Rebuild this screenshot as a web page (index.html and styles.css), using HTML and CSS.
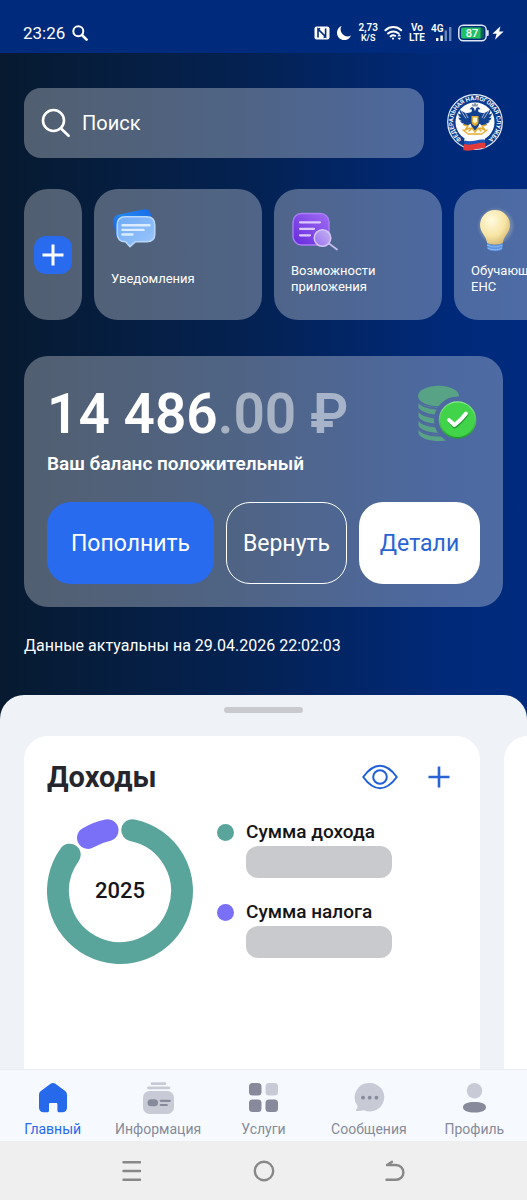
FILE: index.html
```html
<!DOCTYPE html>
<html lang="ru">
<head>
    <meta charset="utf-8">
    <meta name="viewport" content="width=device-width, initial-scale=1">
    <title>Налоги</title>
    <link rel="stylesheet" href="styles.css">
</head>
<body>
    <header class="status-bar">
        <div class="status-left">
            <span class="clock">23:26</span>
            <svg width="16" height="16" viewBox="0 0 16 16" fill="none" stroke="#fff" stroke-width="2" stroke-linecap="round"><circle cx="6.3" cy="6.3" r="5"/><path d="M10 10l4.6 4.6" stroke-width="2.6"/></svg>
        </div>
        <div class="status-right">
            <svg width="16" height="14" viewBox="0 0 16 14"><rect x="0.5" y="0.5" width="15" height="13" rx="2" fill="#fff"/><path d="M4 11.5V3.2L11.6 10.6V2.5M4 3.2L6.2 2.6M11.6 10.6L9.6 11.4" fill="none" stroke="#002b7c" stroke-width="1.6"/></svg>
            <svg width="16" height="16" viewBox="0 0 16 16"><path d="M5.6 1A7.3 7.3 0 1 0 15 10.6 7 7 0 0 1 5.6 1z" fill="#fff"/></svg>
            <span class="tiny">2,73<br><small>K/S</small></span>
            <svg class="wifi" width="19" height="16" viewBox="0 0 19 16" fill="none" stroke="#fff" stroke-width="2" stroke-linecap="round"><path d="M1.4 5.2a11.6 11.6 0 0 1 15.8 0M4 8.4a8 8 0 0 1 10.6 0M6.6 11.4a4.4 4.4 0 0 1 4.6-.6"/><circle cx="9" cy="13.6" r="1.1" fill="#fff" stroke="none"/><path d="M15.3 9l1.9 2.3h-3.8zM15.3 15l1.9-2.3h-3.8z" fill="#fff" stroke="none"/></svg>
            <span class="tiny">Vo<br>LTE</span>
            <svg width="21" height="18" viewBox="0 0 21 18"><text x="0" y="8" class="net-label">4G</text><path d="M5 14h2.4v3H5zM9.4 11.5h2.4V17H9.4z" fill="#fff"/><path d="M13.6 6.5H16V17h-2.4zM18 3h2.4v14H18z" fill="#6c85b8"/></svg>
            <svg class="battery" width="32" height="18" viewBox="0 0 32 18"><rect x="0.8" y="1.3" width="27.4" height="15.4" rx="4.4" fill="none" stroke="#dfe7f5" stroke-width="1.5"/><rect x="3" y="3.4" width="23" height="11.2" rx="2" fill="#0b5f58"/><path d="M5 3.4h17.6v11.2H5a2 2 0 0 1-2-2V5.4a2 2 0 0 1 2-2z" fill="#22c062"/><path d="M29.8 7v4" stroke="#dfe7f5" stroke-width="1.8" stroke-linecap="round"/><text x="14" y="13" text-anchor="middle" class="battery-label">87</text></svg>
            <svg width="12" height="14" viewBox="0 0 12 14"><path d="M8.4 0.2L0.4 7.8h4.2L3 13.8 11.6 5.6H7.2z" fill="#fff"/></svg>
        </div>
    </header>

    <main class="hero">
        <div class="top-row">
            <label class="search">
                <svg width="30" height="30" viewBox="0 0 30 30" fill="none" stroke="#fff" stroke-width="2.6" stroke-linecap="round"><circle cx="12.5" cy="12.5" r="10.5"/><path d="M20 20.5l7.6 7.3"/></svg>
                <input type="search" placeholder="Поиск" aria-label="Поиск">
            </label>
            <svg class="emblem" width="56" height="58" viewBox="0 0 56 58">
                <defs><path id="ring" d="M14 44.700A21.800 21.800 0 1 1 42 44.700"/></defs>
                <circle cx="28" cy="28" r="27.3" fill="#0b3c92" stroke="#e6edf8" stroke-width="1.2"/>
                <circle cx="28" cy="28" r="19.5" fill="#fff"/>
                <!-- eagle -->
                <g fill="#12428f">
                    <path d="M26 17C20 21 16 18 12.5 15.5c0 3 1 4 2 5-1.500 0-2.500-.5-3.500-1.200.3 2.500 1.500 3.800 3 4.500-1 .2-1.800 0-2.700-.4.8 2.300 2 3.200 3.700 3.600-.6.4-1.200.4-1.900.3 1 1.800 2.500 2.300 4 2.300-.3.6-.8.8-1.300.9 3.500 2 7 .5 9.200-2z"/>
                    <path d="M30 17c6 4 10 1 13.5-1.500 0 3-1 4-2 5 1.500 0 2.500-.5 3.500-1.200-.3 2.500-1.500 3.800-3 4.500 1 .2 1.800 0 2.700-.4-.8 2.300-2 3.200-3.700 3.600.6.4 1.200.4 1.900.3-1 1.800-2.500 2.300-4 2.300.3.6.8.8 1.300.9-3.500 2-7 .5-9.200-2z"/>
                    <path d="M24 13.500c2-1 3.500.5 3.500 3h1c0-2.500 1.500-4 3.500-3l1.500 1.800-2.500.2c.5 4 2 6 2 10 0 5-2.500 9-5 11-2.500-2-5-6-5-11 0-4 1.500-6 2-10l-2.500-.2z"/>
                </g>
                <path d="M25.500 12.500l-.8-3 2 1.200L28 8l1.300 2.700 2-1.200-.8 3z" fill="#8a94a8"/>
                <g fill="none" stroke="#e3ac2f" stroke-width="1.5" stroke-linecap="round">
                    <path d="M17 31l4 1-3 4 5-2M39 31l-4 1 3 4-5-2M16 36l4 3M40 36l-4 3M22 37l3-3 3 4 3-4 3 3M21 40h14"/>
                </g>
                <path d="M14 16.500l5 8M17 16l4 8M42 16.500l-5 8M39 16l-4 8" stroke="#fff" stroke-width=".6"/>
                <path d="M24.500 22h7v6c0 2-2 3.500-3.500 4-1.500-.5-3.500-2-3.500-4z" fill="#e3ac2f"/>
                <path d="M26 23.500h4v4l-2 2-2-2z" fill="#fff5d0"/>
                <path d="M18 43c5-2.500 8 2 13 .5 3-1 5-1.500 7-1v4c-8-1-12 3-21 .5z" fill="#fff"/>
                <path d="M17.500 46.500c8 2.500 13-2 20.500-.8l.2 4c-8-1-13 3.500-21.200 1z" fill="#1d55b8"/>
                <path d="M17 50c8 2.500 13-2 21.300-1l.3 5.200c-8-1-14 4.300-22.400 1.800z" fill="#e23a3a"/>
                <text class="emblem-text"><textPath href="#ring" startOffset="50%" text-anchor="middle">ФЕДЕРАЛЬНАЯ НАЛОГОВАЯ СЛУЖБА</textPath></text>
            </svg>
        </div>

        <div class="tiles">
            <button class="tile tile-add" aria-label="Добавить">
                <svg width="38" height="38" viewBox="0 0 38 38"><rect width="38" height="38" rx="12" fill="#286bee"/><path d="M19 8.500v21M8.500 19h21" stroke="#fff" stroke-width="3"/></svg>
            </button>
            <a class="tile" href="#">
                <svg width="48" height="48" viewBox="0 0 48 48">
                    <defs>
                        <linearGradient id="note-back" x1="0" y1="1" x2="1" y2="0"><stop offset="0" stop-color="#1554ef"/><stop offset=".5" stop-color="#2387f0"/><stop offset="1" stop-color="#1768e8"/></linearGradient>
                        <linearGradient id="note-front" x1="0" y1="0" x2="1" y2="1"><stop offset="0" stop-color="#6eabf5"/><stop offset="1" stop-color="#9cc6fb"/></linearGradient>
                    </defs>
                    <path d="M8 8.500L32 3.500c4-.8 7 1 8 5l3 13-32 13c-4-1-5.500-3-6.500-7L2.500 18c-1-5 1-8.500 5.500-9.500z" fill="url(#note-back)"/>
                    <path d="M14.500 10.700h21c5.500 0 8.300 3 8.300 8.300v9c0 5-3 7.800-8 7.800H24.500L19 40.600l-4.500-4.800c-5.500 0-8.300-3-8.300-8V19c0-5.300 3-8.300 8.300-8.300z" fill="url(#note-front)" stroke="#b9d6fd" stroke-width="1.5"/>
                    <path d="M11.500 19.300h27M11.500 23.900h21M11.500 28.500h10" stroke="#dcecff" stroke-width="2.4" stroke-linecap="round"/>
                </svg>
                <span>Уведомления</span>
            </a>
            <a class="tile" href="#">
                <svg width="48" height="48" viewBox="0 0 48 48">
                    <defs>
                        <linearGradient id="find-body" x1="1" y1="0" x2="0" y2="1"><stop offset="0" stop-color="#a06cf3"/><stop offset="1" stop-color="#6529dc"/></linearGradient>
                        <linearGradient id="find-lens" x1="1" y1="0" x2="0" y2="1"><stop offset="0" stop-color="#c5b4f2"/><stop offset="1" stop-color="#9a70ee"/></linearGradient>
                    </defs>
                    <rect x="2" y="7.500" width="36" height="31.500" rx="8.500" fill="url(#find-body)" stroke="#aa7df5" stroke-width="1.4"/>
                    <path d="M9 16.300h20M9 22.800h14M9 29.300h10" stroke="#dcc9ff" stroke-width="2.2" stroke-linecap="round"/>
                    <path d="M38 37.500l8 6" stroke="#c5bdec" stroke-width="1.7" stroke-linecap="round"/>
                    <circle cx="31.500" cy="32" r="8.300" fill="url(#find-lens)" stroke="#d4c6f8" stroke-width="1.5"/>
                </svg>
                <span>Возможности приложения</span>
            </a>
            <a class="tile" href="#">
                <svg width="48" height="48" viewBox="0 0 48 48">
                    <defs>
                        <radialGradient id="bulb-glass" cx=".38" cy=".3" r=".75"><stop offset="0" stop-color="#fffbe0"/><stop offset=".6" stop-color="#f7e5a4"/><stop offset="1" stop-color="#d5b673"/></radialGradient>
                        <radialGradient id="bulb-glow"><stop offset=".6" stop-color="#f9ecc0" stop-opacity=".4"/><stop offset="1" stop-color="#f9ecc0" stop-opacity="0"/></radialGradient>
                    </defs>
                    <circle cx="25" cy="20" r="19" fill="url(#bulb-glow)"/>
                    <path d="M16 37c6 2.500 10 2.500 15.500 0v5.500c-1 3.500-14 3.500-15 0z" fill="#5d95e2"/>
                    <path d="M16 39c6 2.500 10 2.500 15.500 0M16.500 42c5 2.300 10 2.300 14.500 0" fill="none" stroke="#8fbaf2" stroke-width="1"/>
                    <path d="M24 4a15 15 0 0 1 15 15c0 7.500-6 10.500-7.200 18-4.500 2.200-11 2.200-15.600 0C15 29.500 9 26.500 9 19A15 15 0 0 1 24 4z" fill="url(#bulb-glass)"/>
                </svg>
                <span>Обучающие ЕНС</span>
            </a>
        </div>

        <section class="balance">
            <div class="balance-top">
                <div>
                    <div class="amount">14 486<span>.00 ₽</span></div>
                    <div class="balance-note">Ваш баланс положительный</div>
                </div>
                <svg class="coins" width="60" height="58" viewBox="0 0 60 58">
                    <defs>
                        <mask id="coin-cut"><rect width="60" height="58" fill="#fff"/><circle cx="39.5" cy="35" r="23.5" fill="#000"/></mask>
                        <linearGradient id="check-edge" x1="0" y1="0" x2="0" y2="1"><stop offset="0" stop-color="#8af08a"/><stop offset="1" stop-color="#1f9a2c"/></linearGradient>
                    </defs>
                    <g fill="#58a286" mask="url(#coin-cut)">
                        <ellipse cx="20.5" cy="11" rx="20.5" ry="10.2"/>
                        <path d="M.5 16c5 8 34 8 40 0v7c-6 10-36 8-40-.5zM.5 25.500c5 8 34 8 40 0v7c-6 9-36 8-40-1zM.5 34.500c5 8 34 8 40 0v7c-6 9-36 8-40-1zM.5 43.500c5 8 34 8 40 0v5c-4 10-36 10-40 0z"/>
                        <path d="M.5 16.500c5 9 30 9 38 2M.5 25.500c5 9 30 9 38 2M.5 34.500c5 9 30 9 38 2M.5 43.500c5 9 30 9 38 2" fill="none" stroke="#50699f" stroke-width="2"/>
                    </g>
                    <circle cx="39.5" cy="35" r="18.8" fill="url(#check-edge)"/>
                    <circle cx="39.5" cy="34.8" r="17.3" fill="#41d34a"/>
                    <path d="M31.500 36l5.500 5.500c4-3 8-7.500 11.500-12" fill="none" stroke="#259d36" stroke-width="4" stroke-linecap="round" stroke-linejoin="round"/>
                    <path d="M31 35l5.500 5c4-3 8-7 11.500-11.500" fill="none" stroke="#fff" stroke-width="3.8" stroke-linecap="round" stroke-linejoin="round"/>
                </svg>
            </div>
            <div class="actions">
                <button class="btn btn-primary">Пополнить</button>
                <button class="btn btn-outline">Вернуть</button>
                <button class="btn btn-light">Детали</button>
            </div>
        </section>

        <p class="updated">Данные актуальны на 29.04.2026 22:02:03</p>
    </main>

    <section class="sheet">
        <div class="handle"></div>
        <div class="cards">
            <article class="card">
                <div class="card-head">
                    <h2>Доходы</h2>
                    <button class="icon-btn" aria-label="Показать суммы">
                        <svg width="36" height="26" viewBox="0 0 36 26" fill="none" stroke="#1f5fd8" stroke-width="2"><path d="M1.200 13C7 5 12 1.800 18 1.800S29 5 34.800 13C29 21 24 24.200 18 24.200S7 21 1.200 13z" stroke-linejoin="round"/><circle cx="18" cy="13" r="6.800"/></svg>
                    </button>
                    <button class="icon-btn" aria-label="Добавить доход">
                        <svg width="22" height="22" viewBox="0 0 22 22" stroke="#2a63d4" stroke-width="2.6"><path d="M11 .5v21M.5 11h21"/></svg>
                    </button>
                </div>
                <div class="income">
                    <svg class="donut" width="146" height="146" viewBox="0 0 146 146" fill="none" stroke-width="22" stroke-linecap="round">
                        <path d="M85.300 12.200A62 62 0 1 1 22.700 36.700" stroke="#5aa59b"/>
                        <path d="M41 19.900A62 62 0 0 1 60.500 12.300" stroke="#7a70f8"/>
                        <text x="73" y="80" text-anchor="middle" class="year">2025</text>
                    </svg>
                    <dl class="legend">
                        <div class="legend-item">
                            <dt class="green">Сумма дохода</dt>
                            <dd></dd>
                        </div>
                        <div class="legend-item">
                            <dt class="violet">Сумма налога</dt>
                            <dd></dd>
                        </div>
                    </dl>
                </div>
            </article>
            <article class="card"></article>
        </div>
    </section>

    <nav class="tabs">
        <a class="tab active" href="#">
            <svg width="32" height="32" viewBox="0 0 32 32"><path d="M13.600 1.700c1.500-1.100 3.300-1.100 4.800 0l9.400 7c1.400 1 2.200 2.500 2.200 4.200v12.600c0 3-1.800 4.700-4.700 4.700h-3.100c-1.200 0-1.800-.7-1.800-1.800v-6c0-.9-.5-1.400-1.400-1.400h-5.600c-.9 0-1.400.5-1.400 1.400v6c0 1.100-.6 1.800-1.800 1.800H6.700C3.800 30.200 2 28.500 2 25.500V12.900c0-1.700.8-3.200 2.200-4.200z" fill="#2669ea"/></svg>
            <span>Главный</span>
        </a>
        <a class="tab" href="#">
            <svg width="32" height="32" viewBox="0 0 32 32"><path d="M10 1.700h13M6.500 5.800h20.500" stroke="#c8cbd6" stroke-width="2.8" stroke-linecap="round"/><rect x="1" y="9" width="31" height="23" rx="6.500" fill="#c8cbd6"/><rect x="5.500" y="17.300" width="10.500" height="7" rx="3.500" fill="#868a9b"/><path d="M18.800 18.800h9M18.800 23h6" stroke="#868a9b" stroke-width="2.2" stroke-linecap="round"/></svg>
            <span>Информация</span>
        </a>
        <a class="tab" href="#">
            <svg width="32" height="32" viewBox="0 0 32 32" fill="#868a9b"><rect x="2" y="1" width="12.500" height="12.500" rx="3.500"/><rect x="18.500" y="1" width="12.500" height="12.500" rx="3.500" fill="#c8cbd6"/><rect x="2" y="17.500" width="12.500" height="12.500" rx="3.500"/><rect x="18.500" y="17.500" width="12.500" height="12.500" rx="3.500"/></svg>
            <span>Услуги</span>
        </a>
        <a class="tab" href="#">
            <svg width="32" height="32" viewBox="0 0 32 32"><path d="M17 1a14.300 14.300 0 1 1-6 27.300c-2.500.6-5 1-7.500.6-.8-.2-.8-.8-.3-1.300 1-1.200 1.600-2.300 1.300-3.800A14.300 14.300 0 0 1 17 1z" fill="#c8cbd6"/><g fill="#868a9b"><circle cx="10" cy="15.700" r="1.900"/><circle cx="16.700" cy="15.700" r="1.900"/><circle cx="23.400" cy="15.700" r="1.900"/></g></svg>
            <span>Сообщения</span>
        </a>
        <a class="tab" href="#">
            <svg width="32" height="32" viewBox="0 0 32 32"><circle cx="16.500" cy="8.700" r="7.700" fill="#c8cbd6"/><path d="M5 25.200c0-3.800 5-5.200 11.500-5.200S28 21.400 28 25.200s-5 5.200-11.500 5.200S5 29 5 25.200z" fill="#868a9b"/></svg>
            <span>Профиль</span>
        </a>
    </nav>

    <footer class="system-nav">
        <button aria-label="Недавние"><svg width="22" height="22" viewBox="0 0 22 22" stroke="#888" stroke-width="2.4" stroke-linecap="round"><path d="M2.500 2.200h16.500M2.500 11h16.500M2.500 19.800h16.500"/></svg></button>
        <button aria-label="Домой"><svg width="22" height="22" viewBox="0 0 22 22" fill="none" stroke="#888" stroke-width="2.4"><circle cx="11" cy="11" r="9.200"/></svg></button>
        <button aria-label="Назад"><svg width="22" height="22" viewBox="0 0 22 22" fill="none" stroke="#888" stroke-width="2.4" stroke-linecap="round" stroke-linejoin="round"><path d="M2.500 19.800H12a7.400 7.400 0 0 0 0-14.800H3L8 1.800"/></svg></button>
    </footer>
</body>
</html>
```
FILE: styles.css
```css
* {
    box-sizing: border-box;
}
body {
    margin: 0;
    min-height: 100vh;
    display: flex;
    flex-direction: column;
    font-family: Roboto, "Noto Sans", sans-serif;
    color: #fff;
    background: linear-gradient(90deg, #071a30 0%, #042150 45%, #002979 85%, #002b7e 100%);
    overflow-x: hidden;
}
button {
    font: inherit;
    border: 0;
    padding: 0;
    background: none;
    cursor: pointer;
}
a {
    color: inherit;
    text-decoration: none;
}
svg {
    display: block;
    flex: none;
}

/* status bar */
.status-bar {
    display: flex;
    justify-content: space-between;
    height: 53px;
    padding: 13px 23px 0;
    background: #002b7c;
}
.status-left, .status-right {
    display: flex;
    align-items: center;
    height: 40px;
    gap: 7px;
}
.clock {
    font-size: 17px;
}
.status-right {
    gap: 6px;
}
.tiny {
    font-size: 10px;
    line-height: 10px;
    font-weight: 600;
    text-align: center;
}
.tiny small {
    font-size: 9px;
}
.battery {
    margin-right: -4px;
}
.net-label {
    font-size: 10px;
    font-weight: 600;
    fill: #fff;
}
.battery-label {
    font-size: 11px;
    font-weight: 500;
    fill: #fff;
}

/* top part */
.hero {
    padding: 35px 24px 39px;
}
.top-row {
    display: flex;
    align-items: center;
    gap: 23px;
}
.search {
    flex: 1;
    display: flex;
    align-items: center;
    gap: 11px;
    height: 70px;
    padding: 0 17px;
    border-radius: 17px;
    background: rgba(255, 255, 255, 0.3);
}
.search input {
    flex: 1;
    min-width: 0;
    border: 0;
    outline: 0;
    background: none;
    color: #fff;
    font: inherit;
    font-size: 20px;
    padding: 0;
}
.search input::placeholder {
    color: #fff;
    opacity: 1;
}
.emblem-text {
    font-size: 6px;
    font-weight: 600;
    fill: #fff;
}
.tiles {
    display: flex;
    gap: 12px;
    margin: 31px -24px 0 0;
    overflow: hidden;
}
.tile {
    flex: 0 0 168px;
    height: 131px;
    padding: 17px;
    border-radius: 24px;
    background: rgba(255, 255, 255, 0.3);
    display: flex;
    flex-direction: column;
    font-size: 13px;
    line-height: 16px;
}
.tile span {
    flex: 1;
    display: flex;
    align-items: center;
    width: 100px;
}
.tile-add {
    flex-basis: 58px;
    align-items: center;
    justify-content: center;
    padding: 0;
}
.balance {
    margin-top: 36px;
    padding: 24px 23px 23px;
    border-radius: 24px;
    background: rgba(255, 255, 255, 0.3);
}
.balance-top {
    display: flex;
    justify-content: space-between;
}
.amount {
    font-size: 55px;
    line-height: 68px;
    font-weight: 600;
    white-space: nowrap;
}
.amount span {
    color: rgba(255, 255, 255, 0.5);
}
.balance-note {
    margin-top: 4px;
    font-size: 19px;
    line-height: 24px;
    font-weight: 600;
}
.coins {
    margin: 5px 2px 0 0;
}
.actions {
    display: grid;
    grid-template-columns: 167fr 121fr 121fr;
    gap: 12px;
    margin-top: 26px;
}
.btn {
    height: 82px;
    border-radius: 24px;
    font-size: 23px;
    color: #fff;
}
.btn-primary {
    background: #286bee;
}
.btn-outline {
    border: 1px solid #fff;
}
.btn-light {
    background: #fff;
    color: #2a63d4;
}
.updated {
    margin: 29px 0 0;
    font-size: 16px;
    line-height: 20px;
}

/* bottom sheet */
.sheet {
    flex: 1;
    display: flex;
    flex-direction: column;
    border-radius: 24px 24px 0 0;
    background: #eff3f8;
    color: #151519;
}
.handle {
    width: 79px;
    height: 6px;
    margin: 12px auto 23px;
    border-radius: 3px;
    background: #c9cace;
}
.cards {
    flex: 1;
    display: flex;
    gap: 24px;
    padding-left: 24px;
    overflow: hidden;
}
.card {
    flex: 0 0 calc(100% - 47px);
    padding: 24px 23px;
    border-radius: 24px 24px 0 0;
    background: #fff;
}
.card-head {
    display: flex;
    align-items: center;
    gap: 23px;
}
.card-head h2 {
    flex: 1;
    margin: 0;
    font-size: 29px;
    line-height: 34px;
    font-weight: 700;
    color: #25262d;
}
.icon-btn {
    display: grid;
    place-items: center;
    width: 36px;
    height: 34px;
}
.income {
    display: flex;
    gap: 24px;
    margin-top: 24px;
}
.year {
    font-size: 22px;
    font-weight: 500;
    fill: #151519;
}
.legend {
    margin: 0;
}
.legend-item {
    margin-bottom: 20px;
}
.legend dt {
    display: flex;
    align-items: center;
    gap: 12px;
    font-size: 19px;
    line-height: 28px;
    font-weight: 500;
}
.legend dt::before {
    content: "";
    width: 17px;
    height: 17px;
    border-radius: 50%;
    background: #5aa59b;
}
.legend .violet::before {
    background: #7a70f8;
}
.legend dd {
    width: 146px;
    height: 32px;
    margin: 0 0 0 29px;
    border-radius: 12px;
    background: #c9cace;
}

/* tab bar */
.tabs {
    display: grid;
    grid-template-columns: repeat(5, 1fr);
    height: 72px;
    border-top: 1px solid #e9ecf0;
    background: #f6fafe;
    color: #868a9b;
}
.tab {
    display: flex;
    flex-direction: column;
    align-items: center;
    gap: 6px;
    padding-top: 12px;
    font-size: 14px;
    line-height: 18px;
}
.tab.active {
    color: #2669ea;
}
.system-nav {
    display: grid;
    grid-template-columns: repeat(3, 1fr);
    height: 59px;
    padding: 0 12.5%;
    background: #efefef;
}
.system-nav button {
    display: grid;
    place-items: center;
}
```
